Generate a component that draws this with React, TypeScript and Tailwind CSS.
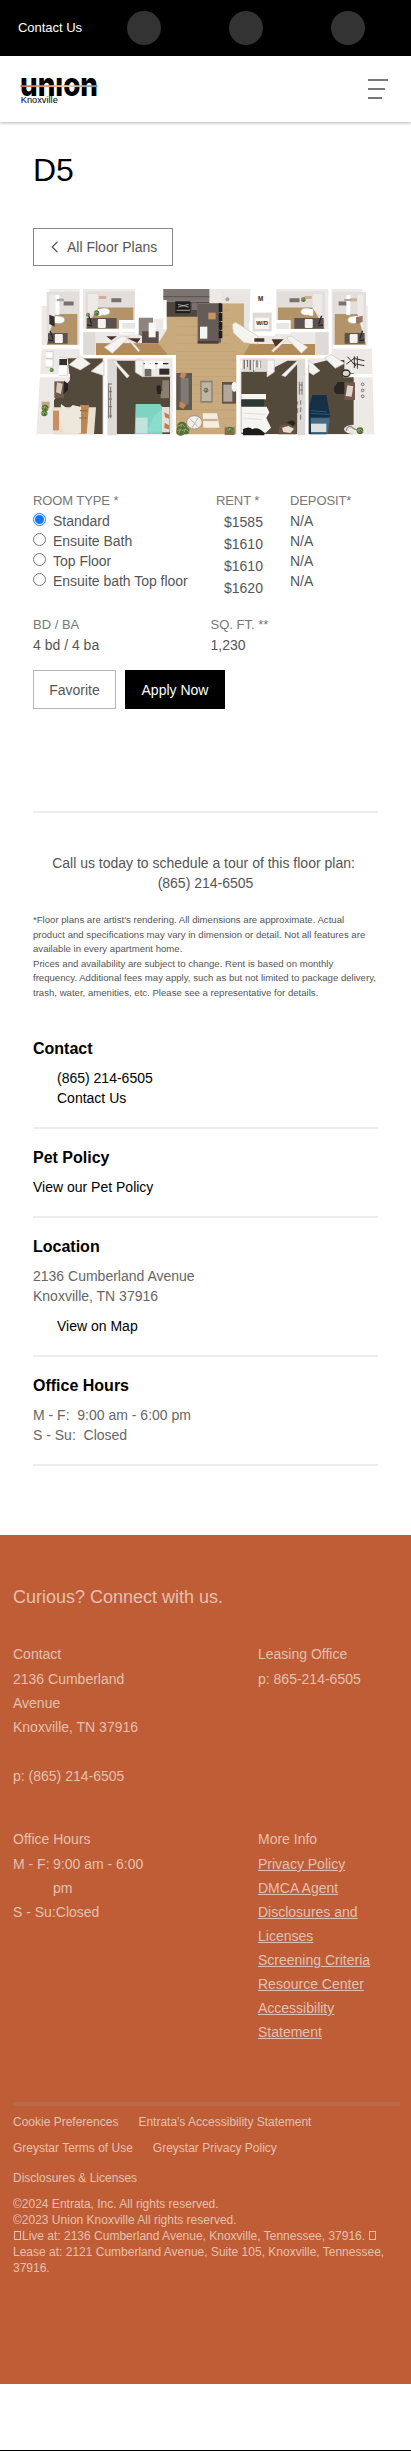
import type { ReactNode } from "react";

const rooms = ["Standard", "Ensuite Bath", "Top Floor", "Ensuite bath Top floor"];
const rents = ["$1585", "$1610", "$1610", "$1620"];
const links = ["Privacy Policy", "DMCA Agent", "Disclosures and Licenses", "Screening Criteria", "Resource Center", "Accessibility Statement"];

function Logo() {
  return (
    <svg width="82" height="50" viewBox="0 -18 82 50" role="img" aria-label="Union Knoxville">
      <defs>
        <linearGradient id="stripe">
          <stop offset="0" stopColor="#d2694a" />
          <stop offset=".4" stopColor="#e8a184" />
          <stop offset=".6" stopColor="#e6d3b0" />
          <stop offset="1" stopColor="#6d93ad" />
        </linearGradient>
      </defs>
      <text x="0" y="19.6" fontFamily="Inter" fontWeight="800" fontSize="33" textLength="78" lengthAdjust="spacingAndGlyphs">union</text>
      <rect x="0" y="-10" width="82" height="11" fill="#fff" />
      <rect x="0.5" y="9.2" width="77" height="1.9" fill="url(#stripe)" />
      <text x="0.8" y="27" fontFamily="Liberation Sans" fontSize="8.6" textLength="37" lengthAdjust="spacingAndGlyphs">Knoxville</text>
    </svg>
  );
}

function Bath({ x, y, w, h, flip }: { x: number; y: number; w: number; h: number; flip?: boolean }) {
  return (
    <g transform={flip ? `translate(${x + w} ${y}) scale(-1 1)` : `translate(${x} ${y})`}>
      <rect width={w} height={h} fill="#e3dedb" />
      <path d={`M${w * 0.25} ${h * 0.42}H${w - 6}V${h}H0Z`} fill="#b39469" />
      <path d={`M${w * 0.25} 8v${h * 0.38}L8 ${h - 35}V8Z`} fill="#eeeae7" />
      <rect x={w * 0.52} y={h * 0.18} width="30" height="12" fill="#7b706a" />
      <rect x={w * 0.27} y={h * 0.12} width="22" height="9" fill="#cfae91" />
      <ellipse cx={w * 0.38} cy={h * 0.53} rx="17" ry="11" fill="#fbfaf8" stroke="#b9aca0" strokeWidth="2" />
      <rect x={w * 0.24} y={h * 0.46} width="13" height="20" rx="3" fill="#fff" />
      <rect x="4" y={h - 35} width={w * 0.6} height="32" fill="#5b524d" />
      <rect x={w * 0.25} y={h - 32} width="24" height="27" rx="3" fill="#f4f2f1" />
      <path d={`M10 ${h - 42}l9 25m-13 3l14 2`} stroke="#292625" strokeWidth="4" />
    </g>
  );
}

function FloorPlan() {
  return (
    <svg width="345" height="180" viewBox="39 0 1035 540" role="img" aria-label="D5 floor plan">
      <path d="M88 57H1027V108H1043V230H1055L1063 498H49L65 236V108H88Z" fill="#ece9e7" />
      <path d="M430 100H672V200L690 222H885V256H655V496H465V256H228V220H415L440 180Z" fill="#c9aa7c" />
      <path d="M228 220H415L440 250V257H228ZM690 222H885V256H670Z" fill="#b38b5b" />
      {[120, 145, 170, 195, 220, 245, 270, 295, 320, 345, 370, 395, 420, 445, 470].map((y) => (
        <path key={y} d={`M470 ${y}H${y < 230 ? 630 : 650}`} stroke="#b99969" strokeWidth="2" opacity=".55" />
      ))}

      <g fill="#544a3b">
        <path d="M143 265H248V493H102V390L150 330Z" />
        <path d="M290 272H368V320H450V493H290Z" />
        <path d="M664 305H738L802 272H832V493H664Z" />
        <path d="M866 285L925 270H973V310H1001V493H866Z" />
      </g>

      <Bath x={80} y={66} w={98} h={158} />
      <Bath x={196} y={64} w={150} h={115} />
      <Bath x={768} y={64} w={147} h={115} flip />
      <Bath x={938} y={66} w={100} h={158} flip />
      <path d="M88 134l16 6v30l-16-8Z" fill="#35302e" />
      <path d="M112 75v60M985 75v60" stroke="#fff" strokeWidth="12" />
      <path d="M110 90h22M973 90h22" stroke="#a9a5a2" strokeWidth="6" />
      <path d="M1008 142l20-5v19l-20 6Z" fill="#957665" />

      <path d="M349 56H430V145L382 150L355 193H297V150H349Z" fill="#fff" />
      <path d="M691 56H763V150H812V192H672L690 150Z" fill="#fff" />
      <path d="M698 128h57v56h-57Z" fill="#ddd9d5" />
      <path d="M704 143h43v34h-43Z" fill="#f8f7f4" />
      <path d="M307 159h43v31h-43M768 159h40v27h-40" fill="#e9e5e1" />
      <path d="M356 143h43v24l10 32h-43l-10-5Z" fill="#8d8480" />
      <path d="M366 184h50v35h-50Z" fill="#5a4d45" />
      <path d="M386 158h21v44h-21Z" fill="#f8f7f5" />
      <text x="714" y="92" fontFamily="Liberation Sans" fontWeight="700" fontSize="19" fill="#252525">M</text>
      <text x="709" y="166" fontFamily="Liberation Sans" fontWeight="700" fontSize="18" fill="#252525">W/D</text>

      <path d="M430 57H568V95H430Z" fill="#7b7471" />
      <path d="M430 80H568" stroke="#5a5350" strokeWidth="3" />
      <path d="M438 95H568V100H533V140H438Z" fill="#50453f" />
      <path d="M466 94h45v36h-45Z" fill="#211e1d" />
      <path d="M474 103l32 8m0-8l-32 8m-4 10h40" stroke="#ddd" strokeWidth="2" fill="none" />
      <path d="M515 98h16v22h-16Z" fill="#79716b" />
      <path d="M533 100h70v118h-70Z" fill="#655c57" />
      <path d="M533 213h63v8h-63Z" fill="#4a403b" />
      <path d="M540 170h22v36h-22Z" fill="#f7f5f2" />
      <path d="M565 128h22v20h-22Z" fill="#c89462" />
      <path d="M596 100h11v26h-11M596 129h11v24h-11M596 156h11v23h-11M596 182h11v23h-11" fill="#211e1d" />
      <path d="M603 62H688V180H672V100H603Z" fill="#e9e5e3" />
      <circle cx="622" cy="88" r="6" fill="#aaa09a" />

      <g fill="none" stroke="#fff" strokeWidth="10">
        <path d="M184 57V263M189 181H350M350 57V193M930 57V263M764 57V182H925M435 90V178M670 192H765M67 231H182M178 260H463V498M654 498V260H935M938 231H1054M257 262V498M859 262V498M54 317H150M970 317H1058" />
        <path d="M50 496H1063" strokeWidth="6" />
      </g>
      <path d="M263 268H290V496H263ZM832 268H856V496H832ZM190 187H226V254H190ZM886 187H926V254H886Z" fill="#dedad7" />

      <g fill="#f5f3f0" stroke="#cbc5bf" strokeWidth="2">
        <path d="M253 232L306 198L328 201L277 250Z" />
        <path d="M316 199L325 202L359 241L355 245Z" />
        <path d="M798 202L813 198L863 232L844 250Z" />
        <path d="M755 242L796 202L804 205L760 246Z" />
        <path d="M637 163L647 157L713 198V222L672 218L640 188Z" />
        <path d="M147 284L180 257L211 281L181 300Z" />
        <path d="M213 304L252 272V317Z" />
        <path d="M277 272L286 272L328 318L321 324Z" />
        <path d="M785 316L832 272L838 275L796 320Z" />
        <path d="M866 270L900 302L880 315L866 306Z" />
        <path d="M914 264L933 253L974 280L946 295Z" />
        <path d="M346 270H369V321L346 307Z" />
        <path d="M741 270H763V306L741 321Z" />
      </g>
      <path d="M259 199h32l-17 12ZM703 205h30v10h-30ZM322 205h40l-10 14ZM755 208h36l-24 22Z" fill="#4b3327" />

      <g>
        <path d="M371 281h74M669 281h68" stroke="#2a2726" strokeWidth="4" />
        <path d="M374 273h16v20h-16m17-20h14v25h-14m22-25h16v20h-16" fill="#fff" />
        <path d="M374 297h20v22h-20Z" fill="#6e6a65" />
        <path d="M418 296h30v18h-30Z" fill="#302d28" />
        <path d="M666 266h75v38h-75Z" fill="#dcd8d3" />
        <path d="M673 270v26m9-26v21m9-21v31m10-30v38m10-38v21m10-20v22" stroke="#776f68" strokeWidth="4" />
        <path d="M664 274v23m14-23v18m25-18v27m16-27v20" stroke="#fff" strokeWidth="4" />
        <path d="M78 245h21v20H78m-1 2h22v24H77m39-6h26v32h-26M117 262h22v17h-22" fill="#fff" stroke="#c7bdb4" strokeWidth="2" />
        <path d="M118 267h23v18h-23Z" fill="#363028" />
        <path d="M982 260l26 28m-29-6l27-19m-5 2l32 7m-35 8l35 7m-30-28v35m9-35v37" stroke="#3b3129" strokeWidth="3" fill="none" />
        <ellipse cx="978" cy="310" rx="12" ry="10" fill="#ddd4c8" stroke="#2e2926" strokeWidth="4" />
      </g>

      <path d="M103 334h29v50h-29Z" fill="#72594a" />
      <path d="M111 337l17 4-5 31-15-5Z" fill="#d5c9bf" />
      <path d="M132 332l12 9v20l-14 12Z" fill="#242322" />
      <path d="M973 337h32v53h-32Z" fill="#72594a" />
      <path d="M982 346l18 3-5 31-18-2Z" fill="#ded6ca" />
      <path d="M949 343q-15 15 0 29h24v-36h-20Z" fill="#292723" />
      <path d="M427 331h20v54h-25v-20l5-2Z" fill="#898073" />
      <path d="M422 347q-20-8-9 25h10Z" fill="#24221f" />

      <path d="M98 412H228L222 492H98Z" fill="#eae0cf" />
      <path d="M180 405h27l-7 86h-22Z" fill="#b88855" />
      <path d="M99 422h18v59H99Z" fill="#c79061" />
      <path d="M123 402l22 16 13-13 25 6v79h-52l-12-49Z" fill="#eee7db" />
      <path d="M180 422h22m-24 22h21" stroke="#8d643d" strokeWidth="3" />
      <path d="M347 402H420L427 410V492H344Z" fill="#7ed3c1" />
      <path d="M348 443h35v47h-35Z" fill="#c0e3db" />
      <path d="M402 438l27-21v68h-49Z" fill="#8addcc" />
      <path d="M426 411h23v76h-23Z" fill="#e3dfd9" />
      <path d="M433 427l14 7v12l-12-4m-1 16l13 8v12l-14-3" fill="#b58158" />
      <path d="M664 372h74v16h-74ZM664 410h76l8 17-9 17 14 29-16 15h-73Z" fill="#f6f5f2" />
      <path d="M664 389h68v20h-68Z" fill="#2a3935" />
      <path d="M669 477q20-10 28 1q15-9 36 10v8h-64" fill="#1b1c1b" />
      <path d="M673 430l65 3m-68 11l56 5" stroke="#d3d1cd" strokeWidth="2" />
      <path d="M877 375h42l11 63-10 55h-52v-85Z" fill="#142f46" />
      <path d="M872 443h58l-7 48h-50Z" fill="#456b86" />
      <path d="M873 461h46v25h-46Z" fill="#dde2e1" />
      <path d="M873 430l55 4m-55-12l48 4" stroke="#2e5879" strokeWidth="3" />

      <path d="M473 309H516V420H469V309Z" fill="#605855" />
      <path d="M482 324H506V403H482Z" fill="#817a74" />
      <path d="M484 306l16 6-8 14-13-5M479 394l20 10-9 13-12-7" fill="#ca8753" />
      <path d="M541 332h37v66h-37Z" fill="#888074" />
      <path d="M545 337h29v56h-29Z" fill="#c0b5a5" />
      <path d="M606 336h42v65h-42Z" fill="#5e524b" />
      <path d="M610 344h27v51h-27Z" fill="#b2a79a" />
      <ellipse cx="643" cy="350" rx="8" ry="15" fill="#f7f5f2" />
      <path d="M548 430h43l8 43h-49Z" fill="#f5eddf" />
      <path d="M548 450h45" stroke="#cbb390" strokeWidth="7" />
      <ellipse cx="523" cy="457" rx="23" ry="20" fill="#f0eee9" stroke="#8b827a" strokeWidth="2" />
      <path d="M509 446l24 23m2-26l-19 30" stroke="#a39b93" strokeWidth="2" />
      <path d="M614 472h30v23h-30Z" fill="#8b6e4c" />
      <path d="M779 464h48v29h-52Z" fill="#6b5443" />
      <path d="M786 473l19-5 17 8-11 13-21-3Z" fill="#e9dfd0" />
      <path d="M800 458q20-14 26 3l-7 8q-19-13-19-11Z" fill="#27231f" />
      <ellipse cx="1003" cy="478" rx="31" ry="14" fill="#ede8df" />
      <path d="M978 482q8-20 18-10t18 5" stroke="#8b8781" strokeWidth="4" fill="none" />
      <path d="M65 395h24v20H65Z" fill="#c8a582" />
      {[[75, 414, 10], [73, 430, 9], [486, 470, 15], [482, 484, 13], [497, 482, 11], [630, 480, 9], [558, 361, 7], [1020, 482, 10], [230, 129, 8], [204, 134, 6], [850, 89, 7], [95, 300, 6]].map(([x, y, r]) => (
        <g key={`${x}-${y}`}>
          <circle cx={x} cy={y} r={r} fill="#54713a" />
          <path d={`M${x - r} ${y}l${r} ${-r / 2}l${r} ${r}m${-r} ${-r}l${-r / 2} ${r}`} fill="none" stroke="#92a660" strokeWidth="3" />
        </g>
      ))}
      <g stroke="#77716e" strokeWidth="3" fill="none">
        <path d="M266 340v105m6-95v95M266 342h10M266 365h10M266 387h10M266 410h10M266 438h10" />
        <path d="M838 335v39m8-39v39M838 345h10m-10 15h10" />
        <path d="M842 391v13m0 8v14m0 8v15m-9-55v10m0 11v14" />
        <circle cx="1028" cy="343" r="4" /><circle cx="1028" cy="361" r="4" /><circle cx="1028" cy="379" r="4" />
      </g>
    </svg>
  );
}

function Section({ title, children }: { title: string; children: ReactNode }) {
  return (
    <section className="border-b-2 border-[#ededed] pb-[19px] text-[14px] leading-5">
      <h2 className="mb-[9px] text-[16px] font-bold leading-5 text-black">{title}</h2>
      {children}
    </section>
  );
}

function Tofu() {
  return <span className="mx-px inline-block h-[9px] w-[7px] border border-[#e5c0ae]" />;
}

export default function App() {
  return (
    <div className="h-[2451px] overflow-hidden border-b border-black bg-white font-['Liberation_Sans',Arial,sans-serif] text-[14px] leading-5 text-[#555]">
      <div className="flex h-14 items-center bg-black pl-[18px]">
        <span className="w-[109px] text-[13px] leading-5 tracking-[-0.03px] text-white">Contact Us</span>
        <div className="flex gap-[68px]">
          {[0, 1, 2].map((n) => <span key={n} className="size-[34px] rounded-full bg-[#333]" />)}
        </div>
      </div>
      <header className="flex h-[66px] justify-between pl-5 pr-[23px] shadow-[0_1px_3px_rgba(0,0,0,0.3)]">
        <div className="pt-0.5"><Logo /></div>
        <div className="flex w-5 flex-col gap-[7px] pt-[23px]">
          <span className="h-0.5 w-5 bg-[#777]" />
          <span className="h-0.5 w-[17px] bg-[#777]" />
          <span className="h-0.5 w-[14px] bg-[#777]" />
        </div>
      </header>

      <main className="h-[1413px] px-[33px] pt-[28px]">
        <h1 className="h-[78px] text-[32px] leading-[40px] text-black">D5</h1>
        <a className="flex h-[38px] w-[140px] items-center border border-[#888] pl-[17px]">
          <svg width="8" height="12" viewBox="0 0 8 12" className="mr-[8px]" fill="none" stroke="#555" strokeWidth="1.2"><path d="M6.5 .8 1.2 6l5.3 5.2" /></svg>
          All Floor Plans
        </a>
        <div className="mt-1 h-[180px]"><FloorPlan /></div>

        <div className="mt-[41px] flex h-[115px]">
          <div className="w-[183px]">
            <div className="h-5 text-[13px] tracking-[-0.1px] text-[#777]">ROOM TYPE *</div>
            {rooms.map((room, i) => (
              <label key={room} className="flex h-5 items-start tracking-[-0.02px]">
                <span className={i === 0 ? "mr-[7px] mt-[2px] flex size-[13px] items-center justify-center rounded-full border border-[#1a73e8]" : "mr-[7px] mt-[2px] size-[13px] rounded-full border border-[#767676]"}>
                  {i === 0 && <span className="size-[9px] rounded-full bg-[#1a73e8]" />}
                </span>
                {room}
              </label>
            ))}
          </div>
          <div className="w-[75px]">
            <div className="h-[21px] text-[13px] tracking-[-0.1px] text-[#777]">RENT *</div>
            {rents.map((rent, i) => <div key={i} className="h-[22px] pl-2">{rent}</div>)}
          </div>
          <div className="-ml-px">
            <div className="h-5 text-[13px] tracking-[-0.1px] text-[#777]">DEPOSIT*</div>
            {rooms.map((room) => <div key={room}>N/A</div>)}
          </div>
        </div>
        <div className="mt-[9px] flex h-[55px]">
          <div className="w-[177.5px]"><div className="text-[13px] text-[#777]">BD / BA</div><div>4 bd / 4 ba</div></div>
          <div><div className="text-[13px] text-[#777]">SQ. FT. **</div><div>1,230</div></div>
        </div>
        <div className="flex gap-[9px]">
          <button className="h-[39px] w-[83px] border border-[#b5b5b5]">Favorite</button>
          <button className="h-[39px] w-[100px] bg-black text-white">Apply Now</button>
        </div>

        <div className="mt-[102px] border-t-2 border-[#ededed] pt-[40px] text-center">
          <p className="pr-1">Call us today to schedule a tour of this floor plan:</p>
          <p>(865) 214-6505</p>
        </div>
        <div className="mt-[20px] h-[126px] whitespace-nowrap text-[9.6px] leading-[14.55px]">
          *Floor plans are artist's rendering. All dimensions are approximate. Actual<br />
          product and specifications may vary in dimension or detail. Not all features are<br />
          available in every apartment home.<br />
          Prices and availability are subject to change. Rent is based on monthly<br />
          frequency. Additional fees may apply, such as but not limited to package delivery,<br />
          trash, water, amenities, etc. Please see a representative for details.
        </div>

        <div className="flex flex-col gap-[19px]">
          <Section title="Contact"><div className="pl-6 text-black">(865) 214-6505<br />Contact Us</div></Section>
          <Section title="Pet Policy"><div className="text-black">View our Pet Policy</div></Section>
          <Section title="Location">
            <div className="text-[#666]">2136 Cumberland Avenue<br />Knoxville, TN 37916</div>
            <div className="mt-[10px] pl-6 text-black">View on Map</div>
          </Section>
          <Section title="Office Hours">
            <div className="whitespace-pre text-[#666]">{"M - F:  9:00 am - 6:00 pm\nS - Su:  Closed"}</div>
          </Section>
        </div>
      </main>

      <footer className="h-[849px] bg-[#bf5d37] pl-[13px] pr-[11px] pt-[50px] text-[#e5c0ae]">
        <h2 className="h-[57px] text-[18px] leading-6">Curious? Connect with us.</h2>
        <div className="grid grid-cols-[245px_1fr] leading-[24px]">
          <div className="h-[185px]"><div className="mb-[1px]">Contact</div>2136 Cumberland<br />Avenue<br />Knoxville, TN 37916<div className="mt-[25px]">p: (865) 214-6505</div></div>
          <div><div className="mb-[1px]">Leasing Office</div>p: 865-214-6505</div>
          <div className="h-[275px]">
            <div className="mb-[1px]">Office Hours</div>
            <div className="flex"><span className="w-10">M - F:</span><span>9:00 am - 6:00<br />pm</span></div>
            S - Su:Closed
          </div>
          <div>
            <div className="mb-[1px]">More Info</div>
            <ul className="w-[120px]">{links.map((l) => <li key={l}><a className="underline">{l}</a></li>)}</ul>
          </div>
        </div>
        <div className="h-1 bg-[#b9694a]" />
        <div className="text-[12px] leading-4">
          <div className="flex h-[26px] gap-[20px] pt-[8px]"><span>Cookie Preferences</span><span>Entrata's Accessibility Statement</span></div>
          <div className="flex h-[30px] gap-[20px] pt-[8px]"><span>Greystar Terms of Use</span><span>Greystar Privacy Policy</span></div>
          <div className="h-[34px] pt-[8px]">Disclosures &amp; Licenses</div>
          <div className="whitespace-nowrap">
            ©2024 Entrata, Inc. All rights reserved.<br />
            ©2023 Union Knoxville All rights reserved.<br />
            <Tofu />Live at: 2136 Cumberland Avenue, Knoxville, Tennessee, 37916. <Tofu /><br />
            Lease at: 2121 Cumberland Avenue, Suite 105, Knoxville, Tennessee,<br />37916.
          </div>
        </div>
      </footer>
    </div>
  );
}
